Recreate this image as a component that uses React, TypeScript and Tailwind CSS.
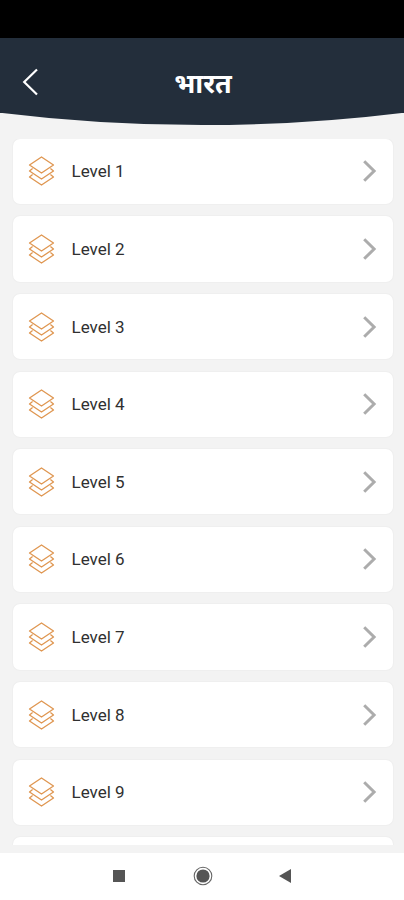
const LEVELS = [1, 2, 3, 4, 5, 6, 7, 8, 9];

function LayersIcon() {
  return (
    <svg className="ml-[15.5px] h-[30px] w-[27px] shrink-0" viewBox="0 0 27 30" fill="none" stroke="#df9650" strokeWidth="1.3" strokeLinejoin="round">
      <path d="M13.5 1 25.5 9 13.5 17 1.5 9Z" />
      <path d="M4.6 12.6 1.5 15 13.5 23 25.5 15 22.4 12.6" />
      <path d="M4.6 18.6 1.5 21 13.5 29 25.5 21 22.4 18.6" />
    </svg>
  );
}

function LevelCard({ level }: { level: number }) {
  return (
    <div className="flex h-[65.2px] shrink-0 items-center rounded-[7px] bg-white shadow-[0_0_2px_rgba(0,0,0,0.07)]">
      <LayersIcon />
      <span className="ml-[16.5px] grow text-[17px] leading-6 text-[#303030]">Level {level}</span>
      <svg className="mr-[15px] h-6 w-4" viewBox="0 0 16 24" fill="none" stroke="#acacac" strokeWidth="3">
        <path d="M2.2 2.2 12.1 12 2.2 21.8" />
      </svg>
    </div>
  );
}

export default function App() {
  return (
    <div className="flex h-[900px] w-[404px] flex-col overflow-hidden bg-white font-[Roboto,'Noto_Sans',sans-serif]">
      <div className="h-[38px] shrink-0 bg-black" />
      <div className="flex h-[815px] shrink-0 flex-col bg-[#f3f3f3]">
        <header className="grid h-[75px] shrink-0 grid-cols-[60px_1fr_60px] items-center bg-[#232e3b] pt-[13px]">
          <svg className="ml-[22px] h-7 w-4" viewBox="0 0 16 28" fill="none" stroke="#ffffff" strokeWidth="2.2">
            <path d="M15 1.5 2.2 14 15 26.5" />
          </svg>
          <h1 className="pt-[4px] pl-[2px] text-center text-[27px] leading-[40px] font-bold text-white">भारत</h1>
        </header>
        <svg className="-mt-px block h-[14px] w-full shrink-0" viewBox="0 0 404 14" preserveAspectRatio="none">
          <path d="M0 0H404V.7Q202 25.5 0 .7Z" fill="#232e3b" />
        </svg>
        <main className="mt-[12.9px] flex h-[706.1px] shrink-0 flex-col gap-[12.4px] overflow-hidden pr-[11.5px] pl-[12.5px]">
          {LEVELS.map((level) => (
            <LevelCard key={level} level={level} />
          ))}
          <div className="h-[65.2px] shrink-0 rounded-[7px] bg-white shadow-[0_0_2px_rgba(0,0,0,0.07)]" />
        </main>
      </div>
      <nav className="flex h-[47px] shrink-0 items-center justify-center pb-px">
        <div className="h-3 w-3 bg-[#555555]" />
        <svg className="ml-[68px] h-5 w-5" viewBox="0 0 20 20">
          <circle cx="10" cy="10" r="8.8" fill="none" stroke="#666666" strokeWidth="1.1" />
          <circle cx="10" cy="10" r="6.6" fill="#555555" />
        </svg>
        <svg className="ml-[66px] h-[14px] w-3" viewBox="0 0 12 14">
          <path d="M0 7 12 0V14Z" fill="#555555" />
        </svg>
      </nav>
    </div>
  );
}
